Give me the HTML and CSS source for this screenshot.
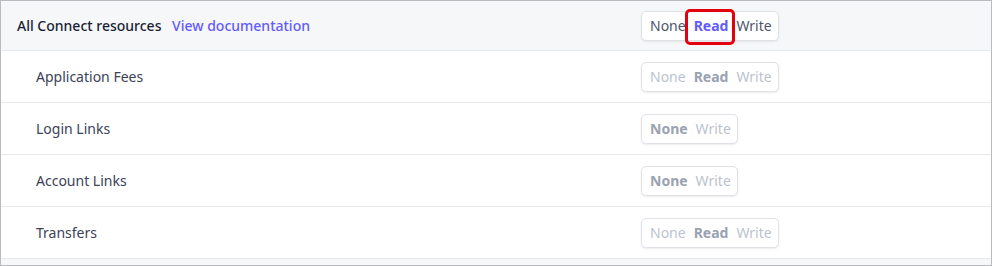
FILE: index.html
```html
<!DOCTYPE html>
<html lang="en">
<head>
    <meta charset="UTF-8">
    <title>Connect permissions</title>
    <link rel="stylesheet" href="styles.css">
</head>
<body>
    <div class="panel">
        <!-- Group header -->
        <div class="row row-head">
            <div class="label">
                <span class="group-title">All Connect resources</span>
                <a href="#" class="doc-link">View documentation</a>
            </div>
            <div class="seg">
                <span class="opt">None</span>
                <span class="opt opt-on">Read</span>
                <span class="opt">Write</span>
                <span class="callout"></span>
            </div>
        </div>
        <!-- Resources -->
        <div class="row">
            <div class="label sub">Application Fees</div>
            <div class="seg seg-off">
                <span class="opt">None</span>
                <span class="opt opt-on">Read</span>
                <span class="opt">Write</span>
            </div>
        </div>
        <div class="row">
            <div class="label sub">Login Links</div>
            <div class="seg seg-off">
                <span class="opt opt-on">None</span>
                <span class="opt">Write</span>
            </div>
        </div>
        <div class="row">
            <div class="label sub">Account Links</div>
            <div class="seg seg-off">
                <span class="opt opt-on">None</span>
                <span class="opt">Write</span>
            </div>
        </div>
        <div class="row">
            <div class="label sub">Transfers</div>
            <div class="seg seg-off">
                <span class="opt">None</span>
                <span class="opt opt-on">Read</span>
                <span class="opt">Write</span>
            </div>
        </div>
        <div class="foot"></div>
    </div>
</body>
</html>
```

FILE: styles.css
```css
body {
    margin: 0;
    font-family: "Noto Sans", "Open Sans", sans-serif;
    background: #fff;
}
.panel {
    height: 266px;
    box-sizing: border-box;
    border: 1px solid #b9bbbf;
    background: #f6f7f9;
    overflow: hidden;
}
.row {
    display: grid;
    grid-template-columns: 640px auto;
    align-items: center;
    height: 52px;
    box-sizing: border-box;
    background: #fff;
    border-bottom: 1px solid #e6e8ec;
}
.row-head {
    height: 50px;
    background: #f6f7f9;
}
.label {
    padding-left: 16px;
    font-size: 14px;
    color: #3c4257;
}
.label.sub {
    padding-left: 35px;
}
.group-title {
    font-weight: 500;
    color: #1a1f36;
}
.doc-link {
    margin-left: 7px;
    color: #635bff;
    font-weight: 500;
    text-decoration: none;
}
.seg {
    position: relative;
    justify-self: start;
    display: flex;
    align-items: center;
    height: 30px;
    padding: 0 2px 0 4px;
    box-sizing: border-box;
    background: #fff;
    border: 1px solid #dfe2e7;
    border-radius: 5px;
    box-shadow: 0 1px 2px rgba(0, 0, 0, 0.08);
    font-size: 14px;
    color: #4f566b;
}
.opt {
    padding: 0 4px;
}
.seg-off .opt {
    color: #bcc3cf;
}
.opt-on {
    font-weight: 700;
    color: #635bff;
}
.seg-off .opt-on {
    color: #9aa2b1;
}
.callout {
    position: absolute;
    left: 43px;
    top: -3px;
    width: 50px;
    height: 36px;
    box-sizing: border-box;
    border: 3px solid #e3000f;
    border-radius: 5px;
}
.foot {
    height: 7px;
    background: #f6f7f9;
}
```
